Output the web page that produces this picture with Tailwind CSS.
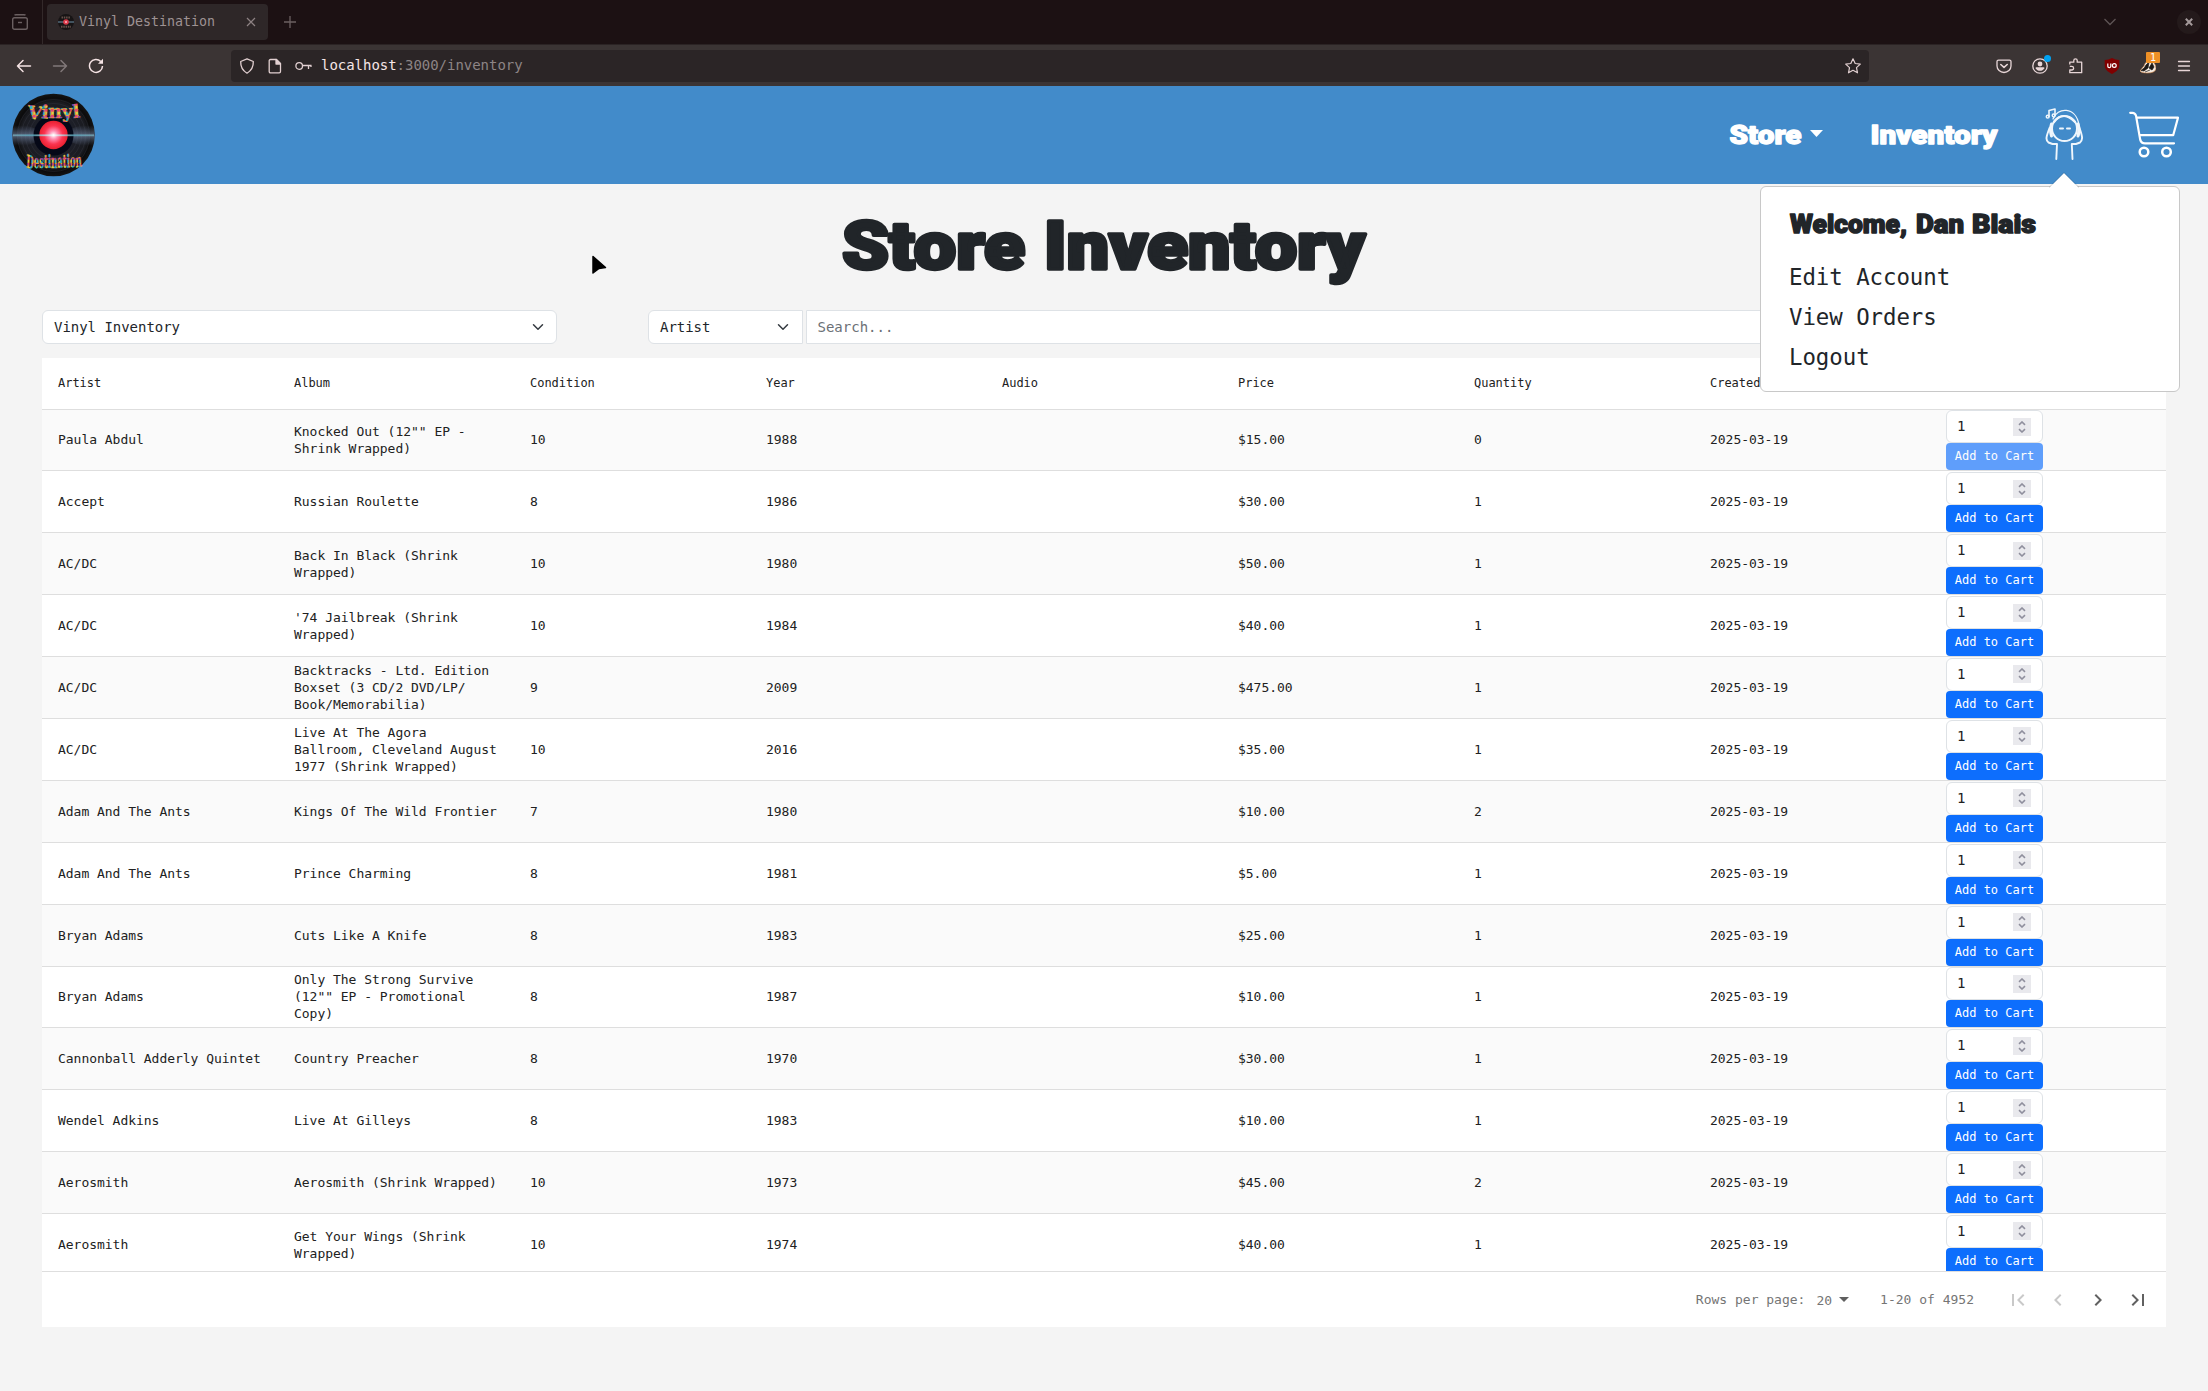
<!DOCTYPE html>
<html lang="en">
<head>
<meta charset="utf-8">
<title>Vinyl Destination</title>
<script src="https://cdn.jsdelivr.net/npm/@tailwindcss/browser@4"></script>
</head>
<body class="w-[2208px] h-[1391px] overflow-hidden bg-[#f4f4f4] font-['DejaVu_Sans_Mono',monospace] text-[#212529] flex flex-col relative">

<!-- Tab strip -->
<div class="h-11 shrink-0 bg-[#1c1113] flex items-center">
  <div class="w-[43px] h-full border-r border-[#33292a] flex items-center justify-center pr-[2px]">
    <svg class="w-4 h-4" viewBox="0 0 16 16" fill="none" stroke="#6b6061" stroke-width="1.4"><path d="M2.5 1.2C3 .7 3.500 .7 4 .7h8c.5 0 1 0 1.500.5"/><rect x=".7" y="3.700" width="14.600" height="11.600" rx="1.800"/><path d="M6 8.500h4"/></svg>
  </div>
  <div class="ml-1 w-[221px] h-9 rounded bg-[#2e2728] flex items-center pl-[11px]">
    <svg class="w-4 h-4 shrink-0" viewBox="0 0 16 16"><circle cx="8" cy="8" r="8" fill="#171415"/><path d="M0 8h16" stroke="#526878" stroke-width="1.500"/><path d="M3.500 3.500h9M3 12.700h10" stroke="#66504a" stroke-width="2" stroke-dasharray="1.500 .8"/><circle cx="8" cy="8" r="2.800" fill="#d93a48"/><circle cx="8" cy="8" r="1" fill="#ffb0c0"/></svg>
    <span class="ml-[5px] w-[161px] text-[13.3px] text-[#9e9293] whitespace-nowrap">Vinyl Destination</span>
    <svg class="w-[10px] h-[10px] shrink-0 ml-[6px]" viewBox="0 0 10 10" stroke="#8d8283" stroke-width="1.200"><path d="M1 1l8 8M9 1L1 9"/></svg>
  </div>
  <svg class="ml-[16px] w-3 h-3" viewBox="0 0 12 12" stroke="#6b6061" stroke-width="1.300"><path d="M6 0v12M0 6h12"/></svg>
  <div class="ml-auto flex items-center pr-[7px]">
    <svg class="w-3 h-2 mr-[61px]" viewBox="0 0 12 8" fill="none" stroke="#5e5455" stroke-width="1.300"><path d="M.5 1L6 6.500 11.500 1"/></svg>
    <div class="w-6 h-6 rounded-full bg-[#241a1b] flex items-center justify-center">
      <svg class="w-2 h-2" viewBox="0 0 8 8" stroke="#a49a9b" stroke-width="2"><path d="M.8.8l6.400 6.400M7.200.8L.8 7.200"/></svg>
    </div>
  </div>
</div>

<!-- Address toolbar -->
<div class="h-[42px] shrink-0 bg-[#3b3434] border-t border-[#2b2324] flex items-center pl-4 pr-4">
  <svg class="w-4 h-4" viewBox="0 0 16 16" fill="none" stroke="#f5e3e4" stroke-width="1.500" stroke-linejoin="round" stroke-linecap="round"><path d="M14.500 8H1.500M7 2.500L1.500 8 7 13.500"/></svg>
  <svg class="w-4 h-4 ml-5" viewBox="0 0 16 16" fill="none" stroke="#817879" stroke-width="1.500" stroke-linejoin="round" stroke-linecap="round"><path d="M1.500 8h13M9 2.500L14.500 8 9 13.500"/></svg>
  <svg class="w-4 h-4 ml-5" viewBox="0 0 16 16" fill="none" stroke="#f5e3e4" stroke-width="1.500"><path d="M12.800 3.500A6.500 6.500 0 1 0 14.500 8"/><path d="M15 .8v5H10z" fill="#f5e3e4" stroke="none"/></svg>
  <div class="ml-[127px] w-[1638px] h-8 rounded bg-[#2b2526] flex items-center pl-2 pr-2">
    <svg class="w-4 h-4" viewBox="0 0 16 16" fill="none" stroke="#e2d0d1" stroke-width="1.300" stroke-linejoin="round"><path d="M8 .8l6.300 2.700c.2 5-1.300 8.700-6.300 11.700C3 12.200 1.500 8.500 1.700 3.500z"/></svg>
    <svg class="w-4 h-4 ml-3" viewBox="0 0 16 16" fill="none" stroke="#e2d0d1" stroke-width="1.300" stroke-linejoin="round"><path d="M3.500 1.500h6l4 4v8c0 .8-.5 1.300-1.300 1.300H3.500c-.8 0-1.300-.5-1.300-1.300V2.800c0-.8.5-1.300 1.300-1.300z"/><path d="M9 1.500v4.500h4.500z" fill="#e2d0d1"/></svg>
    <svg class="w-[17px] h-4 ml-3" viewBox="0 0 17 16" fill="none" stroke="#e2d0d1" stroke-width="1.300"><circle cx="4.200" cy="8" r="3.300"/><path d="M7.500 7.500h9M13.500 7.500v3.500M16 7.500v1.500"/></svg>
    <span class="ml-[9px] text-[14px] tracking-[-0.03px] text-[#f5e6e7]">localhost<span class="text-[#8d8485]">:3000/inventory</span></span>
    <svg class="w-4 h-4 ml-auto" viewBox="0 0 16 16" fill="none" stroke="#e2d0d1" stroke-width="1.200" stroke-linejoin="round"><path d="M8 .8l2.200 4.700 5.100.6-3.800 3.500 1 5.200L8 12.300l-4.500 2.500 1-5.200L.7 6.100l5.100-.6z"/></svg>
  </div>
  <div class="ml-auto flex items-center gap-5">
    <svg class="w-4 h-4" viewBox="0 0 16 16" fill="none" stroke="#e8d6d7" stroke-width="1.300" stroke-linejoin="round" stroke-linecap="round"><path d="M2.500 2.200h11c.8 0 1.500.6 1.500 1.400V8a7 6.500 0 0 1-14 0V3.600c0-.8.700-1.400 1.500-1.400z"/><path d="M4.800 6.500L8 9.300l3.200-2.800" stroke-width="1.600"/></svg>
    <div class="relative w-4 h-4">
      <svg class="w-4 h-4" viewBox="0 0 16 16" fill="none" stroke="#e8d6d7" stroke-width="1.300"><circle cx="8" cy="8" r="7.200"/><circle cx="8" cy="6" r="2.400" fill="#e8d6d7" stroke="none"/><path d="M3.500 10.200q0-1 1-1h7q1 0 1 1c-1 1.700-2.700 2.600-4.500 2.600s-3.500-.9-4.500-2.600z" fill="#e8d6d7" stroke="none"/></svg>
      <span class="absolute -right-[3px] -top-[3px] w-[7px] h-[7px] rounded-full bg-[#00a2f2]"></span>
    </div>
    <svg class="w-4 h-4" viewBox="0 0 16 16" fill="none" stroke="#e8d6d7" stroke-width="1.300" stroke-linejoin="round"><path d="M1.800 6.500V4.200h4V2.500a1.700 1.700 0 0 1 3.400 0v1.700h4.500v10.500H1.800V12h2a1.800 1.800 0 0 0 0-3.600h-2"/></svg>
    <svg class="w-4 h-4" viewBox="0 0 16 16"><path d="M8 0c2.300 1.300 4.700 2 7.300 2v5.500c0 3.700-3.300 6.500-7.300 8.500C4 14 .7 11.200.7 7.500V2C3.300 2 5.700 1.300 8 0z" fill="#800000"/><path d="M3.800 5.500v2.800c0 1.700 3 1.700 3 0V5.500" fill="none" stroke="#fff" stroke-width="1.200"/><circle cx="10.300" cy="7.500" r="1.900" fill="none" stroke="#fff" stroke-width="1.200"/></svg>
    <div class="relative w-4 h-4">
      <svg class="w-4 h-4" viewBox="0 0 16 16"><path d="M0 13Q2 10 4 8 6 2 11 3q5 2 5 8-1 4-9 4-6 0-7-2z" fill="#f4ece4" stroke="#d98a4a" stroke-width=".6"/><path d="M1 12.500Q5 10 6 7l3-3-1 6-4 3zM9 10l3-5 2 4-2 3zM5 14l5-2" fill="#1d1815" stroke="#1d1815" stroke-width=".7"/></svg>
      <span class="absolute left-[6px] -top-[6px] w-[14px] h-[11px] rounded-[1px] bg-[#ee9026] text-white text-[10px] leading-[11px] text-center">1</span>
    </div>
    <svg class="w-4 h-4" viewBox="0 0 16 16" stroke="#e8d6d7" stroke-width="1.300" stroke-linecap="round"><path d="M2.500 3.500h11M2.500 8h11M2.500 12.500h11"/></svg>
  </div>
</div>

<!-- Site navigation -->
<nav class="h-[98px] shrink-0 bg-[#428bca] flex items-center pl-[11.500px]">
  <svg class="w-[83px] h-[83px] overflow-visible" viewBox="0 0 83 83">
    <defs>
      <radialGradient id="disc"><stop offset=".4" stop-color="#060a16"/><stop offset=".5" stop-color="#1d1f28"/><stop offset=".8" stop-color="#1a1b20"/><stop offset=".9" stop-color="#0b0b0c"/><stop offset="1" stop-color="#141414"/></radialGradient>
      <linearGradient id="sheen" x1="0" y1="0" x2="0" y2="1"><stop offset=".15" stop-color="#62718f" stop-opacity="0"/><stop offset=".5" stop-color="#7f93b5" stop-opacity=".6"/><stop offset=".85" stop-color="#62718f" stop-opacity="0"/></linearGradient>
      <linearGradient id="beam"><stop offset="0" stop-color="#74a6b5"/><stop offset=".25" stop-color="#59a9bd"/><stop offset=".5" stop-color="#fff"/><stop offset=".75" stop-color="#59a9bd"/><stop offset="1" stop-color="#74a6b5"/></linearGradient>
      <radialGradient id="label"><stop offset="0" stop-color="#fff"/><stop offset=".3" stop-color="#ff8cb0"/><stop offset=".65" stop-color="#fb3450"/><stop offset="1" stop-color="#e8202f"/></radialGradient>
      <pattern id="confetti" width="6" height="6" patternUnits="userSpaceOnUse"><rect width="6" height="6" fill="#e8a13a"/><rect width="2.500" height="3" fill="#36b3c9"/><rect x="3" y="3" width="2.500" height="2.500" fill="#e3417c"/><rect x="4" width="2" height="2" fill="#d9d24a"/><rect y="4" width="2.500" height="2" fill="#8a4fb0"/></pattern>
    </defs>
    <circle cx="41.500" cy="41" r="41.300" fill="url(#disc)"/>
    <g fill="none" stroke="#4b4f5c" stroke-width=".4" opacity=".6"><circle cx="41.500" cy="41.500" r="24"/><circle cx="41.500" cy="41.500" r="28"/><circle cx="41.500" cy="41.500" r="32"/><circle cx="41.500" cy="41.500" r="36"/></g>
    <path d="M41.500 41.500L3 27a41 41 0 0 0 0 29zM41.500 41.500L80 27a41 41 0 0 1 0 29z" fill="url(#sheen)"/>
    <circle cx="41.500" cy="41.500" r="20" fill="#050817"/>
    <circle cx="41.500" cy="41" r="14.200" fill="url(#label)"/>
    <rect x="1" y="40.400" width="81" height="1.800" fill="url(#beam)" opacity=".8"/>
    <g fill="url(#confetti)" stroke="url(#confetti)" stroke-width=".5" font-family="'DejaVu Serif',serif" font-weight="700">
      <text x="14.500" y="24" font-size="18" textLength="54" lengthAdjust="spacingAndGlyphs" rotate="8 4 0 -4 -6">Vinyl</text>
      <text x="14" y="73.500" font-size="18" textLength="56" lengthAdjust="spacingAndGlyphs" rotate="6 4 3 2 1 0 -1 -2 -3 -4 -6">Destination</text>
    </g>
  </svg>
  <div class="ml-auto flex items-center">
    <svg class="w-[74px] h-10 overflow-visible" viewBox="0 0 74 40"><text x="0.500" y="28.500" font-family="Roboto,sans-serif" font-weight="900" font-size="25" textLength="72" lengthAdjust="spacingAndGlyphs" fill="#fff" stroke="#fff" stroke-width="1.300" stroke-linejoin="round">Store</text></svg>
    <svg class="w-[13px] h-[7px] ml-[7px] mb-1" viewBox="0 0 13 7"><path d="M0 0h13L6.500 7z" fill="#fff"/></svg>
    <svg class="w-[128px] h-10 ml-[47px] overflow-visible" viewBox="0 0 128 40"><text x="0.500" y="28.500" font-family="Roboto,sans-serif" font-weight="900" font-size="25" textLength="127" lengthAdjust="spacingAndGlyphs" fill="#fff" stroke="#fff" stroke-width="1.300" stroke-linejoin="round">Inventory</text></svg>
    <svg class="w-[38px] h-[52px] ml-[47px] mr-px mb-[3px]" viewBox="0 0 38 52" fill="none" stroke="#eff6fc" stroke-linecap="round" stroke-linejoin="round">
      <path d="M8 11C12-1 31-2 34 17v10" stroke-width="1.300"/>
      <circle cx="19.500" cy="20.500" r="12.500" stroke-width="2"/>
      <path d="M9 14q9-12 21 0" stroke-width="2.200"/>
      <path d="M6.500 16q-2 6 0 12M33 16q2 6 0 12" stroke-width="3"/>
      <path d="M4.500 20C1.500 28 0 32 3.500 34.500l4 1.500h4.500l-.7 15M34.500 20c2.500 7 4 12 .5 14.500L31 36h-4.200l.7 15" stroke-width="1.900"/>
      <path d="M15 20.500h3M22 20.500h3" stroke-width="2"/>
      <path d="M4 8.500V2.500L10 1v6" stroke-width="1.600"/><circle cx="2.700" cy="8.700" r="1.400" stroke-width="1.500"/><circle cx="8.700" cy="7.500" r="1.400" stroke-width="1.500"/>
    </svg>
    <svg class="w-[50px] h-[47px] ml-[45px] mr-[29px] mb-[2px]" viewBox="0 0 50 47" fill="none" stroke="#fff" stroke-width="2.200" stroke-linecap="round" stroke-linejoin="round">
      <path d="M1.200 1.800h2.300q2.500 0 3.500 2.800l4.200 24q1 3.700 4.800 3.700h29"/><path d="M8 6.700h41l-4.800 17.500H11"/><circle cx="15" cy="41" r="4.300" stroke-width="2.500"/><circle cx="37.500" cy="41" r="4.300" stroke-width="2.500"/>
    </svg>
  </div>
</nav>

<!-- Page content -->
<main class="px-[42px] flex flex-col">
  <h1 class="h-[126px] flex justify-center pt-[16px]">
    <svg class="w-[526px] h-[100px] overflow-visible" viewBox="0 0 526 100" font-family="Roboto,sans-serif" font-weight="900" font-size="66" fill="#212529" stroke="#212529" stroke-width="3.600" stroke-linejoin="round"><text y="69"><tspan x="1" textLength="183" lengthAdjust="spacingAndGlyphs">Store</tspan> <tspan x="203" textLength="321" lengthAdjust="spacingAndGlyphs">Inventory</tspan></text></svg>
  </h1>
  <div class="flex h-[34px] text-[14px]">
    <div class="w-[515px] bg-white border border-[#dee2e6] rounded-md flex items-center justify-between pl-[11px] pr-[12px]">
      <span class="tracking-[-0.03px]">Vinyl Inventory</span>
      <svg class="w-3 h-3" viewBox="0 0 16 16" fill="none" stroke="#343a40" stroke-width="2" stroke-linecap="round" stroke-linejoin="round"><path d="M2 5l6 6 6-6"/></svg>
    </div>
    <div class="ml-[91px] w-[155px] bg-white border border-[#dee2e6] rounded-l-md flex items-center justify-between pl-[11px] pr-[13px]">
      <span class="tracking-[-0.03px]">Artist</span>
      <svg class="w-3 h-3" viewBox="0 0 16 16" fill="none" stroke="#343a40" stroke-width="2" stroke-linecap="round" stroke-linejoin="round"><path d="M2 5l6 6 6-6"/></svg>
    </div>
    <div class="ml-[3px] flex-1 bg-white border border-[#dee2e6] rounded-r-md flex items-center pl-[10.500px] text-[#6b7076]">Search...</div>
  </div>

  <section class="mt-[14px] bg-white flex flex-col">
    <div class="h-[51.5px] border-b border-[#dedede] grid grid-cols-9 items-center text-[12px] text-[#212121]" id="head"></div>
    <div class="h-[861.5px] overflow-hidden text-[13px] leading-[17px] text-[#212121]" id="rows"></div>
    <div class="h-14 border-t border-[#dedede] flex items-center justify-end text-[13px] text-[#757575] pr-4">
      <span>Rows per page:</span>
      <span class="ml-[11px] pt-[2px]">20</span>
      <svg class="ml-[7px] w-[10px] h-[5px]" viewBox="0 0 10 5"><path d="M0 0h10L5 5z" fill="#5f5f5f"/></svg>
      <span class="ml-[31px]">1-20 of 4952</span>
      <div class="ml-[32px] flex gap-4 pt-px">
        <svg class="w-6 h-6" viewBox="0 0 24 24" fill="#c9c9c9"><path d="M18.410 16.590L13.820 12l4.590-4.590L17 6l-6 6 6 6zM6 6h2v12H6z"/></svg>
        <svg class="w-6 h-6" viewBox="0 0 24 24" fill="#c9c9c9"><path d="M15.410 7.410L14 6l-6 6 6 6 1.410-1.410L10.830 12z"/></svg>
        <svg class="w-6 h-6" viewBox="0 0 24 24" fill="#616161"><path d="M10 6L8.590 7.410 13.170 12l-4.580 4.590L10 18l6-6z"/></svg>
        <svg class="w-6 h-6" viewBox="0 0 24 24" fill="#616161"><path d="M5.590 7.410L10.180 12l-4.590 4.590L7 18l6-6-6-6zM16 6h2v12h-2z"/></svg>
      </div>
    </div>
  </section>
</main>

<!-- Account popover -->
<div class="absolute left-[1760px] top-[186px] w-[420px] h-[206px] bg-white border border-[#c8c8c8] rounded-md pl-[28px] pt-[20px]">
  <svg class="absolute left-[288px] -top-[15px] w-[30px] h-[16px]" viewBox="0 0 30 16"><path d="M0 16L15 1l15 15z" fill="#fff"/><path d="M0 15.500L15 .7l15 14.800" fill="none" stroke="#000" stroke-opacity=".2" stroke-width=".8"/></svg>
  <svg class="w-[250px] h-[36px] overflow-visible" viewBox="0 0 250 36" font-family="Roboto,sans-serif" font-weight="900" font-size="25" fill="#212529" stroke="#212529" stroke-width="1.400" stroke-linejoin="round"><text y="25.500"><tspan x="1" textLength="117" lengthAdjust="spacingAndGlyphs">Welcome,</tspan> <tspan x="127" textLength="48" lengthAdjust="spacingAndGlyphs">Dan</tspan> <tspan x="183" textLength="64" lengthAdjust="spacingAndGlyphs">Blais</tspan></text></svg>
  <ul class="mt-[13.500px] text-[22.4px] leading-[40.4px] tracking-[-0.05px]">
    <li>Edit Account</li>
    <li>View Orders</li>
    <li>Logout</li>
  </ul>
</div>

<!-- Pointer -->
<svg class="absolute left-[591px] top-[255px] w-4 h-5" viewBox="0 0 16 20"><path d="M2 1.500L14.500 12.500 8 13.500 2 18z" fill="#000" stroke="#000" stroke-width="1.500" stroke-linejoin="round"/></svg>

<script>
const columns = ["Artist", "Album", "Condition", "Year", "Audio", "Price", "Quantity", "Created At", ""];
const records = [
  ["Paula Abdul", 'Knocked Out (12"" EP -<br>Shrink Wrapped)', 10, 1988, "15.00", 0],
  ["Accept", "Russian Roulette", 8, 1986, "30.00", 1],
  ["AC/DC", "Back In Black (Shrink<br>Wrapped)", 10, 1980, "50.00", 1],
  ["AC/DC", "'74 Jailbreak (Shrink<br>Wrapped)", 10, 1984, "40.00", 1],
  ["AC/DC", "Backtracks - Ltd. Edition<br>Boxset (3 CD/2 DVD/LP/<br>Book/Memorabilia)", 9, 2009, "475.00", 1],
  ["AC/DC", "Live At The Agora<br>Ballroom, Cleveland August<br>1977 (Shrink Wrapped)", 10, 2016, "35.00", 1],
  ["Adam And The Ants", "Kings Of The Wild Frontier", 7, 1980, "10.00", 2],
  ["Adam And The Ants", "Prince Charming", 8, 1981, "5.00", 1],
  ["Bryan Adams", "Cuts Like A Knife", 8, 1983, "25.00", 1],
  ["Bryan Adams", 'Only The Strong Survive<br>(12"" EP - Promotional<br>Copy)', 8, 1987, "10.00", 1],
  ["Cannonball Adderly Quintet", "Country Preacher", 8, 1970, "30.00", 1],
  ["Wendel Adkins", "Live At Gilleys", 8, 1983, "10.00", 1],
  ["Aerosmith", "Aerosmith (Shrink Wrapped)", 10, 1973, "45.00", 2],
  ["Aerosmith", "Get Your Wings (Shrink<br>Wrapped)", 10, 1974, "40.00", 1]
];
const cell = v => `<div class="pl-4 whitespace-nowrap tracking-[-0.026px]">${v}</div>`;
document.getElementById("head").innerHTML = columns.map(cell).join("");
document.getElementById("rows").innerHTML = records.map(([artist, album, condition, year, price, quantity], i) => `
  <div class="h-[61.9px] border-b border-[#dedede] grid grid-cols-9 items-center ${i % 2 ? "bg-white" : "bg-[#fafafa]"}">
    ${[artist, album, condition, year, "", "$" + price, quantity, "2025-03-19"].map(cell).join("")}
    <div class="ml-4 w-[97px] h-[60.9px] flex flex-col justify-end">
      <div class="h-[33px] bg-white border border-[#dee2e6] rounded-md flex items-center justify-between pl-[10px] pr-[11px] text-[14px]">
        <span>1</span>
        <span class="w-[18px] h-[18px] bg-[#e9e9ed] flex items-center justify-center">
          <svg class="w-2 h-3" viewBox="0 0 8 12" fill="none" stroke="#8f8f9d" stroke-width="1.600"><path d="M1 3.800L4 1l3 2.800M1 8.200L4 11l3-2.800"/></svg>
        </span>
      </div>
      <div class="h-[27px] rounded bg-[#0d6efd] text-white text-[12px] flex items-center justify-center ${quantity ? "" : "opacity-65"}">Add to Cart</div>
    </div>
  </div>`).join("");
</script>
</body>
</html>
